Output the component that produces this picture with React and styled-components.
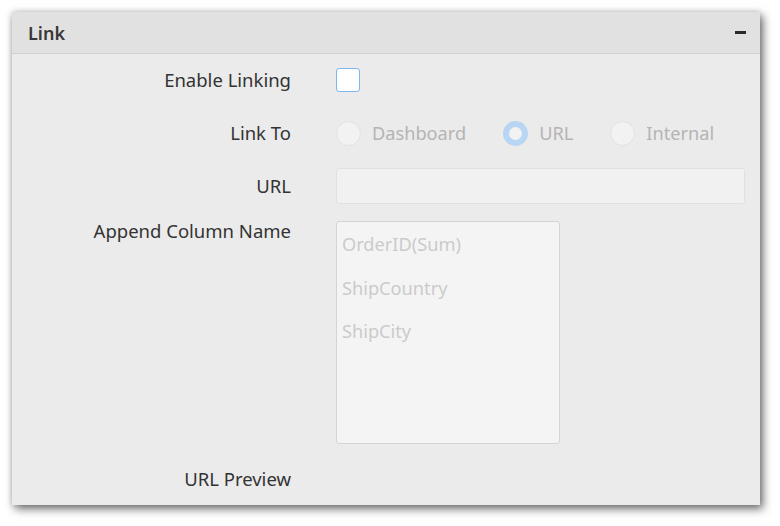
import React from "react";
import styled, { createGlobalStyle } from "styled-components";

const Global = createGlobalStyle`
  html, body { margin: 0; padding: 0; background: #ffffff; }
  body { font-family: "Noto Sans", "Open Sans", sans-serif; }
`;

const Page = styled.div`
  padding: 12px 20px 21px 12px;
  width: 780px;
  height: 526px;
  box-sizing: border-box;
`;

const Panel = styled.section`
  width: 748px;
  height: 493px;
  background: #ebebeb;
  box-shadow: 0 0 6px rgba(0, 0, 0, 0.18), 3px 4px 9px rgba(0, 0, 0, 0.55);
  display: flex;
  flex-direction: column;
`;

const Header = styled.header`
  height: 41px;
  border-bottom: 1px solid #d2d2d2;
  background: #e1e1e1;
  display: flex;
  align-items: center;
  justify-content: space-between;
  padding: 0 14px 0 16px;
`;

const Title = styled.h2`
  margin: 0;
  font-size: 18px;
  font-weight: 600;
  color: #383838;
`;

const Minus = styled.span`
  display: block;
  width: 11px;
  height: 3px;
  background: #2a2a2a;
`;

const Body = styled.div`
  display: flex;
  flex-direction: column;
  gap: 17px;
  padding-top: 8px;
`;

const Row = styled.div`
  display: grid;
  grid-template-columns: 279px 1fr;
  column-gap: 45px;
  align-items: ${(p) => (p.$top ? "start" : "center")};
  min-height: 36px;
`;

const Label = styled.label`
  text-align: right;
  font-size: 18.5px;
  line-height: 20px;
  color: #333333;
`;

const Checkbox = styled.span`
  display: block;
  width: 22px;
  height: 22px;
  border: 1px solid #7db6ee;
  border-radius: 3px;
  background: #ffffff;
`;

const RadioGroup = styled.div`
  display: flex;
  align-items: center;
  gap: 37px;
`;

const RadioItem = styled.div`
  display: flex;
  align-items: center;
  gap: 11px;
  font-size: 18.2px;
  color: #b4b4b4;
`;

const RadioCircle = styled.span`
  display: block;
  box-sizing: border-box;
  width: 25px;
  height: 25px;
  border-radius: 50%;
  background: #f2f2f2;
  border: ${(p) => (p.$checked ? "6px solid #b8d5f3" : "1px solid #e2e2e2")};
`;

const TextInput = styled.div`
  box-sizing: border-box;
  width: 409px;
  height: 36px;
  background: #f1f1f1;
  border: 1px solid #e0e0e0;
  border-radius: 3px;
`;

const ListBox = styled.ul`
  box-sizing: border-box;
  margin: 0;
  padding: 6px 0 0 5px;
  list-style: none;
  width: 224px;
  height: 223px;
  background: #f4f4f4;
  border: 1px solid #d4d4d4;
  border-radius: 3px;
`;

const ListItem = styled.li`
  height: 43.5px;
  line-height: 33px;
  font-size: 18.2px;
  color: #cbcbcb;
`;

export default function App() {
  return (
    <>
      <Global />
      <Page>
        <Panel>
          <Header>
            <Title>Link</Title>
            <Minus />
          </Header>
          <Body>
            <Row>
              <Label>Enable Linking</Label>
              <Checkbox />
            </Row>
            <Row>
              <Label>Link To</Label>
              <RadioGroup>
                <RadioItem>
                  <RadioCircle />
                  Dashboard
                </RadioItem>
                <RadioItem>
                  <RadioCircle $checked />
                  URL
                </RadioItem>
                <RadioItem>
                  <RadioCircle />
                  Internal
                </RadioItem>
              </RadioGroup>
            </Row>
            <Row>
              <Label>URL</Label>
              <TextInput />
            </Row>
            <Row $top>
              <Label>Append Column Name</Label>
              <ListBox>
                <ListItem>OrderID(Sum)</ListItem>
                <ListItem>ShipCountry</ListItem>
                <ListItem>ShipCity</ListItem>
              </ListBox>
            </Row>
            <Row>
              <Label>URL Preview</Label>
              <span />
            </Row>
          </Body>
        </Panel>
      </Page>
    </>
  );
}
